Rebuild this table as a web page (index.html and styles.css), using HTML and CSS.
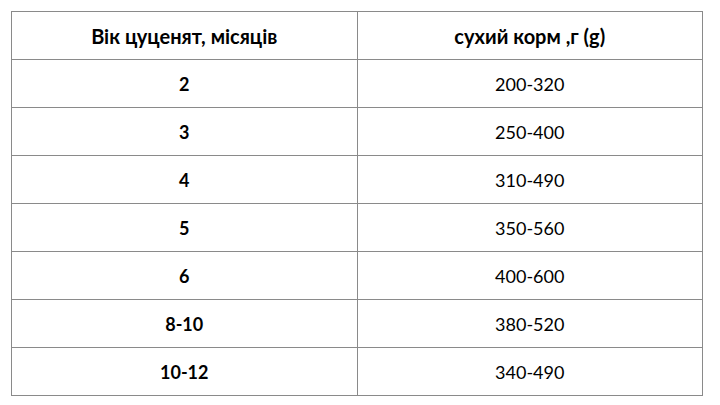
FILE: index.html
```html
<!DOCTYPE html>
<html lang="uk">
<head>
<meta charset="utf-8">
<link rel="stylesheet" href="styles.css">
</head>
<body>
<table class="feed">
  <thead>
    <tr><th>Вік цуценят, місяців</th><th>сухий корм ,г (g)</th></tr>
  </thead>
  <tbody>
    <tr><td class="age">2</td><td>200-320</td></tr>
    <tr><td class="age">3</td><td>250-400</td></tr>
    <tr><td class="age">4</td><td>310-490</td></tr>
    <tr><td class="age">5</td><td>350-560</td></tr>
    <tr><td class="age">6</td><td>400-600</td></tr>
    <tr><td class="age">8-10</td><td>380-520</td></tr>
    <tr><td class="age">10-12</td><td>340-490</td></tr>
  </tbody>
</table>
</body>
</html>
```
FILE: styles.css
```css
html, body {
  margin: 0;
  background: #ffffff;
}
body {
  padding: 11px 0 0 11px;
  font-family: Lato, "Open Sans", "Liberation Sans", sans-serif;
  color: #000000;
}
.feed {
  border-collapse: collapse;
  table-layout: fixed;
  width: 692px;
}
.feed th,
.feed td {
  border: 1px solid #8a8a8a;
  height: 47px;
  padding: 0;
  text-align: center;
  vertical-align: middle;
  font-size: 18px;
  line-height: 20px;
}
.feed th {
  font-size: 20px;
  font-weight: 700;
}
.feed td {
  font-weight: 400;
}
.feed td.age {
  font-weight: 700;
}
```
